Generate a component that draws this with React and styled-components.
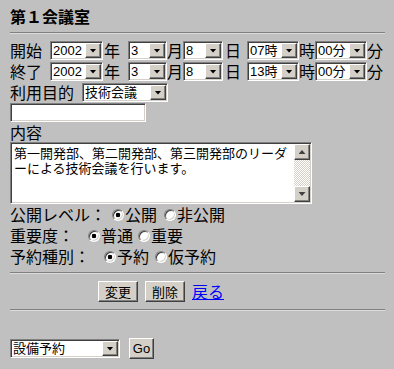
import React from 'react';
import styled, { createGlobalStyle } from 'styled-components';

const GlobalStyle = createGlobalStyle`
  html, body {
    margin: 0;
    padding: 0;
    background: #c0c0c0;
  }
`;

const sunken = `
  border: 1px solid;
  border-color: #808080 #ffffff #ffffff #808080;
  box-shadow: inset 1px 1px #404040, inset -1px -1px #d4d0c8;
`;

const raised = `
  border: 1px solid;
  border-color: #ffffff #404040 #404040 #ffffff;
  box-shadow: inset -1px -1px #808080, inset 1px 1px #d4d0c8;
`;

const Page = styled.div`
  box-sizing: border-box;
  width: 394px;
  min-height: 369px;
  padding: 4px 9px 0 10px;
  font: 16px/21px "Noto Sans CJK JP", sans-serif;
  color: #000;
`;

const Title = styled.h1`
  margin: 0;
  font: bold 16px/24px "Noto Sans CJK JP", sans-serif;
`;

const Rule = styled.hr`
  margin: ${p => p.$top}px 0 0;
  height: 0;
  border: 0;
  border-top: 1px solid #808080;
  border-bottom: 1px solid #dcdcdc;
`;

const Form = styled.form`
  margin: 6px 0 0;
`;

const Row = styled.div`
  display: flex;
  align-items: center;
  height: 21px;
  white-space: nowrap;
`;

const Label = styled.span`
  display: inline-block;
  width: ${p => p.$w}px;
  flex: 0 0 auto;
`;

const Unit = styled.span`
  margin: 0 ${p => p.$mr || 0}px 0 ${p => p.$ml || 0}px;
`;

const SelectBox = styled.span`
  display: inline-flex;
  box-sizing: border-box;
  width: ${p => p.$w}px;
  height: 19px;
  padding: 1px;
  background: #fff;
  ${sunken}
`;

const NativeSelect = styled.select`
  appearance: none;
  flex: 1;
  min-width: 0;
  height: 100%;
  margin: 0;
  padding: 0 0 0 1px;
  border: 0;
  outline: 0;
  background: transparent;
  color: #000;
  font: 13px/15px "Liberation Sans", "Noto Sans CJK JP", sans-serif;
`;

const ArrowButton = styled.span`
  display: flex;
  flex: 0 0 auto;
  align-items: center;
  justify-content: center;
  box-sizing: border-box;
  width: 16px;
  height: ${p => p.$h || 15}px;
  background: #d4d0c8;
  ${raised}

  &::after {
    content: '';
    width: 7px;
    height: 4px;
    background: ${p => p.$shade || '#000'};
    clip-path: ${p => (p.$up ? 'polygon(50% 0, 100% 100%, 0 100%)' : 'polygon(0 0, 100% 0, 50% 100%)')};
  }
`;

const TextInput = styled.input`
  display: block;
  box-sizing: border-box;
  width: 136px;
  height: 19px;
  margin: 0;
  padding: 0 3px;
  background: #fff;
  outline: 0;
  font: 13px "Noto Sans CJK JP", sans-serif;
  ${sunken}
`;

const FieldLabel = styled.div`
  height: 20px;
  line-height: 20px;
`;

const MemoBox = styled.div`
  display: flex;
  box-sizing: border-box;
  width: 302px;
  height: 62px;
  padding: 1px;
  background: #fff;
  ${sunken}
`;

const Memo = styled.textarea`
  flex: 1;
  min-width: 0;
  margin: 0;
  padding: 1px 2px;
  border: 0;
  outline: 0;
  resize: none;
  overflow: hidden;
  background: transparent;
  color: #000;
  font: 13px/15px "Noto Sans CJK JP", sans-serif;
  line-break: loose;
`;

const ScrollBar = styled.div`
  display: flex;
  flex-direction: column;
  width: 16px;
`;

const ScrollTrack = styled.span`
  flex: 1;
  background: repeating-conic-gradient(#d4d0c8 0 25%, #ffffff 0 50%) 0 0 / 2px 2px;
`;

const RadioGroup = styled.div`
  margin-top: 0;
`;

const Option = styled.label`
  display: inline-flex;
  align-items: center;
  gap: 1px;
  margin-right: ${p => p.$mr || 0}px;
`;

const Radio = styled.input.attrs({ type: 'radio' })`
  appearance: none;
  box-sizing: border-box;
  width: 12px;
  height: 12px;
  margin: 0;
  border-radius: 50%;
  background: #fff;
  border: 1px solid;
  border-color: #808080 #ffffff #ffffff #808080;
  box-shadow: inset 1px 1px #404040, inset -1px -1px #d4d0c8;

  &:checked {
    background: radial-gradient(circle at 50% 50%, #000 0 2px, #fff 2.6px);
  }
`;

const ButtonRow = styled.div`
  display: flex;
  align-items: center;
  gap: 7px;
  height: 21px;
  margin-top: 7px;
  padding-left: 88px;
`;

const Button = styled.button`
  box-sizing: border-box;
  width: ${p => p.$w}px;
  height: ${p => p.$h || 21}px;
  margin: 0;
  padding: 0;
  background: #d4d0c8;
  color: #000;
  font: 13px/15px ${p => (p.$latin ? '"Liberation Sans", ' : '')}"Noto Sans CJK JP", sans-serif;
  ${raised}
`;

const BackLink = styled.a`
  color: #0000ff;
  text-decoration: underline;
  font-size: 16px;
`;

const Footer = styled.div`
  display: flex;
  align-items: center;
  gap: 9px;
  height: 21px;
  margin-top: 27px;
`;

const Select = ({ width, value, options }) => (
  <SelectBox $w={width}>
    <NativeSelect defaultValue={value}>
      {(options || [value]).map(o => (
        <option key={o}>{o}</option>
      ))}
    </NativeSelect>
    <ArrowButton />
  </SelectBox>
);

const DateRow = ({ label, year, month, day, hour, minute }) => (
  <Row>
    <Label $w={40}>{label}</Label>
    <Select width={53} value={year} />
    <Unit $ml={1} $mr={8}>年</Unit>
    <Select width={39} value={month} />
    <Unit>月</Unit>
    <Select width={40} value={day} />
    <Unit $ml={2} $mr={6}>日</Unit>
    <Select width={52} value={hour} />
    <Unit>時</Unit>
    <Select width={52} value={minute} />
    <Unit>分</Unit>
  </Row>
);

const RadioRow = ({ label, labelWidth, name, options, spacing }) => (
  <Row>
    <Label $w={labelWidth}>{label}</Label>
    {options.map((o, i) => (
      <Option key={o} $mr={spacing}>
        <Radio name={name} defaultChecked={i === 0} />
        {o}
      </Option>
    ))}
  </Row>
);

export default function App() {
  return (
    <Page>
      <GlobalStyle />
      <Title>第１会議室</Title>
      <Rule $top={4} />
      <Form onSubmit={e => e.preventDefault()}>
        <DateRow label="開始" year="2002" month="3" day="8" hour="07時" minute="00分" />
        <DateRow label="終了" year="2002" month="3" day="8" hour="13時" minute="00分" />
        <Row>
          <Label $w={72}>利用目的</Label>
          <Select width={86} value="技術会議" />
        </Row>
        <TextInput type="text" />
        <FieldLabel>内容</FieldLabel>
        <MemoBox>
          <Memo defaultValue="第一開発部、第二開発部、第三開発部のリーダーによる技術会議を行います。" />
          <ScrollBar>
            <ArrowButton $up $h={16} $shade="#404040" />
            <ScrollTrack />
            <ArrowButton $h={16} $shade="#404040" />
          </ScrollBar>
        </MemoBox>
        <RadioGroup>
          <RadioRow label="公開レベル：" labelWidth={102} name="level" options={['公開', '非公開']} spacing={7} />
          <RadioRow label="重要度：" labelWidth={78} name="priority" options={['普通', '重要']} spacing={5} />
          <RadioRow label="予約種別：" labelWidth={94} name="kind" options={['予約', '仮予約']} spacing={6} />
        </RadioGroup>
        <Rule $top={5} />
        <ButtonRow>
          <Button type="button" $w={40}>変更</Button>
          <Button type="button" $w={40}>削除</Button>
          <BackLink href="#">戻る</BackLink>
        </ButtonRow>
        <Rule $top={7} />
        <Footer>
          <Select width={110} value="設備予約" />
          <Button type="button" $w={25} $latin>Go</Button>
        </Footer>
      </Form>
    </Page>
  );
}
